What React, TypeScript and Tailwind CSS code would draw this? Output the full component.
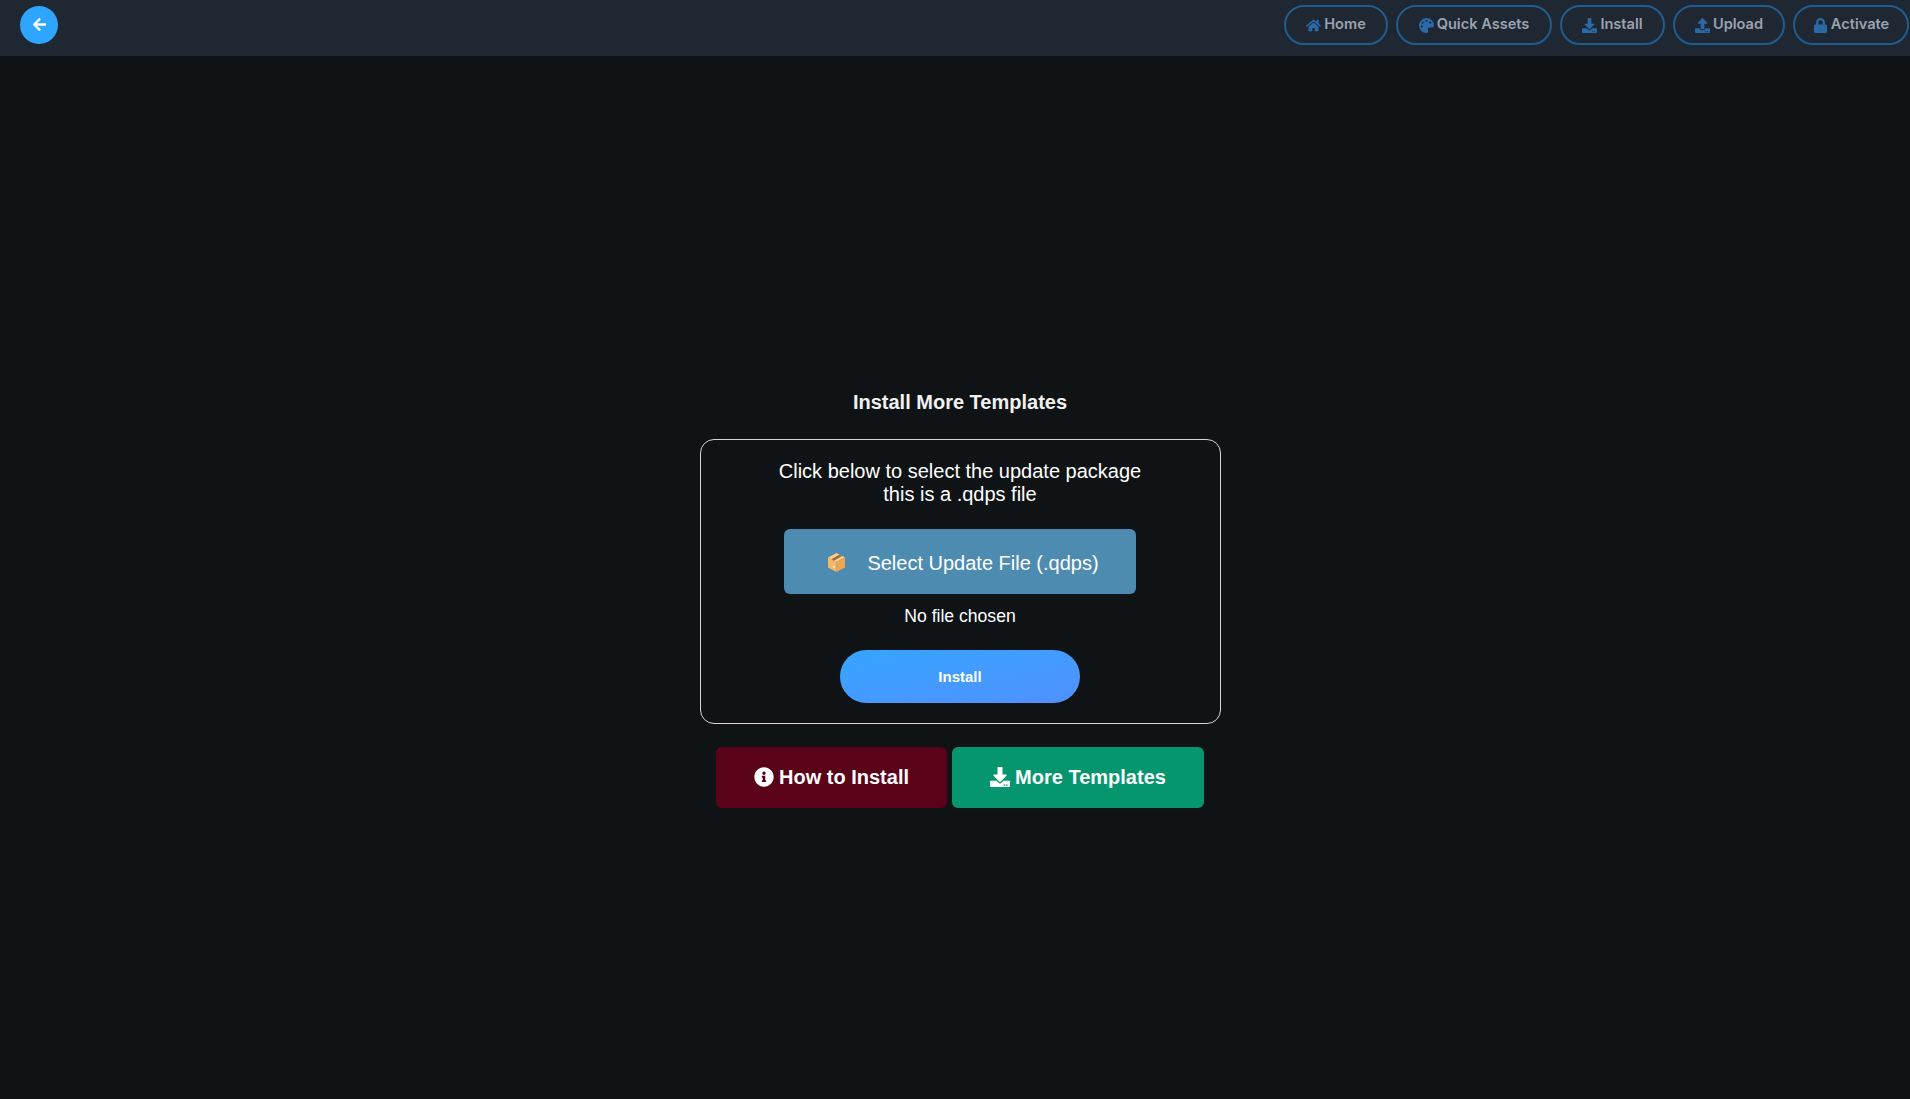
import { FaArrowLeft, FaDownload, FaHome, FaInfoCircle, FaLock, FaPalette, FaUpload } from "react-icons/fa";

const NAV_ITEMS = [
  { label: "Home", icon: FaHome, width: "w-[104px]" },
  { label: "Quick Assets", icon: FaPalette, width: "w-[156px]" },
  { label: "Install", icon: FaDownload, width: "w-[105px]" },
  { label: "Upload", icon: FaUpload, width: "w-[112px]" },
  { label: "Activate", icon: FaLock, width: "w-[116px]" },
];

function BoxIcon() {
  return (
    <svg width="17" height="19" viewBox="0 0 17 19">
      <path d="M8.5 0 L17 4.5 L8.5 9 L0 4.5 Z" fill="#f9cf8e" />
      <path d="M0 4.5 L8.5 9 V19 L0 14.5 Z" fill="#f7b765" />
      <path d="M17 4.5 L8.5 9 V19 L17 14.5 Z" fill="#eea650" />
      <path d="M3.5 6.3 L11.5 1.6 L14 3 L6 7.7 Z" fill="#a4673e" />
      <rect x="5" y="13" width="2" height="2" fill="#fbe7c8" />
    </svg>
  );
}

export default function App() {
  return (
    <div className="min-h-[1099px] bg-[#0f1315] font-['Liberation_Sans',sans-serif] text-white">
      <nav className="flex h-[56px] items-center justify-between bg-[#1f2733] pb-[7px] pl-5 pr-px">
        <button className="flex h-[38px] w-[38px] items-center justify-center rounded-full bg-[#2ea6ff] text-white">
          <FaArrowLeft className="text-[15px]" />
        </button>
        <div className="flex gap-2">
          {NAV_ITEMS.map((item) => (
            <a
              key={item.label}
              className={`flex h-[40px] items-center justify-center gap-[3px] rounded-full border-2 border-[#1f5c8f] pt-px font-['Inter',sans-serif] text-[14.6px] font-semibold text-[#9aa3ad] ${item.width}`}
            >
              <item.icon className="text-[15px] text-[#2a69a5]" />
              {item.label}
            </a>
          ))}
        </div>
      </nav>

      <main className="flex flex-col items-center pl-[10px] pt-[335px]">
        <h2 className="text-[20px] font-bold leading-[23px] text-[#f1f1f1]">Install More Templates</h2>

        <div className="mt-[25px] flex h-[285px] w-[521px] flex-col items-center rounded-[14px] border border-[#d6d6d6] pt-[20px]">
          <p className="text-center text-[20px] leading-[23px]">
            Click below to select the update package
            <br />
            this is a .qdps file
          </p>
          <button className="mt-[23px] flex h-[65px] w-[352px] items-center justify-center gap-[22px] rounded-[6px] bg-[#4e8bb0] pl-[7px] pt-[2px] text-[20px]">
            <BoxIcon />
            Select Update File (.qdps)
          </button>
          <p className="mt-[12px] text-[17.6px] leading-[21px]">No file chosen</p>
          <button className="mt-[23px] h-[53px] w-[240px] rounded-full bg-linear-to-br from-[#33a6ff] to-[#4f90ff] pt-[2px] text-[15px] font-bold">
            Install
          </button>
        </div>

        <div className="mt-[23px] flex gap-[5px]">
          <button className="flex h-[61px] w-[231px] items-center justify-center gap-[5px] rounded-[6px] bg-[#5a0218] pb-[2px] text-[20px] font-bold">
            <FaInfoCircle className="text-[20px]" />
            How to Install
          </button>
          <button className="flex h-[61px] w-[252px] items-center justify-center gap-[5px] rounded-[6px] bg-[#05966d] pb-[2px] text-[20px] font-bold">
            <FaDownload className="text-[20px]" />
            More Templates
          </button>
        </div>
      </main>
    </div>
  );
}
